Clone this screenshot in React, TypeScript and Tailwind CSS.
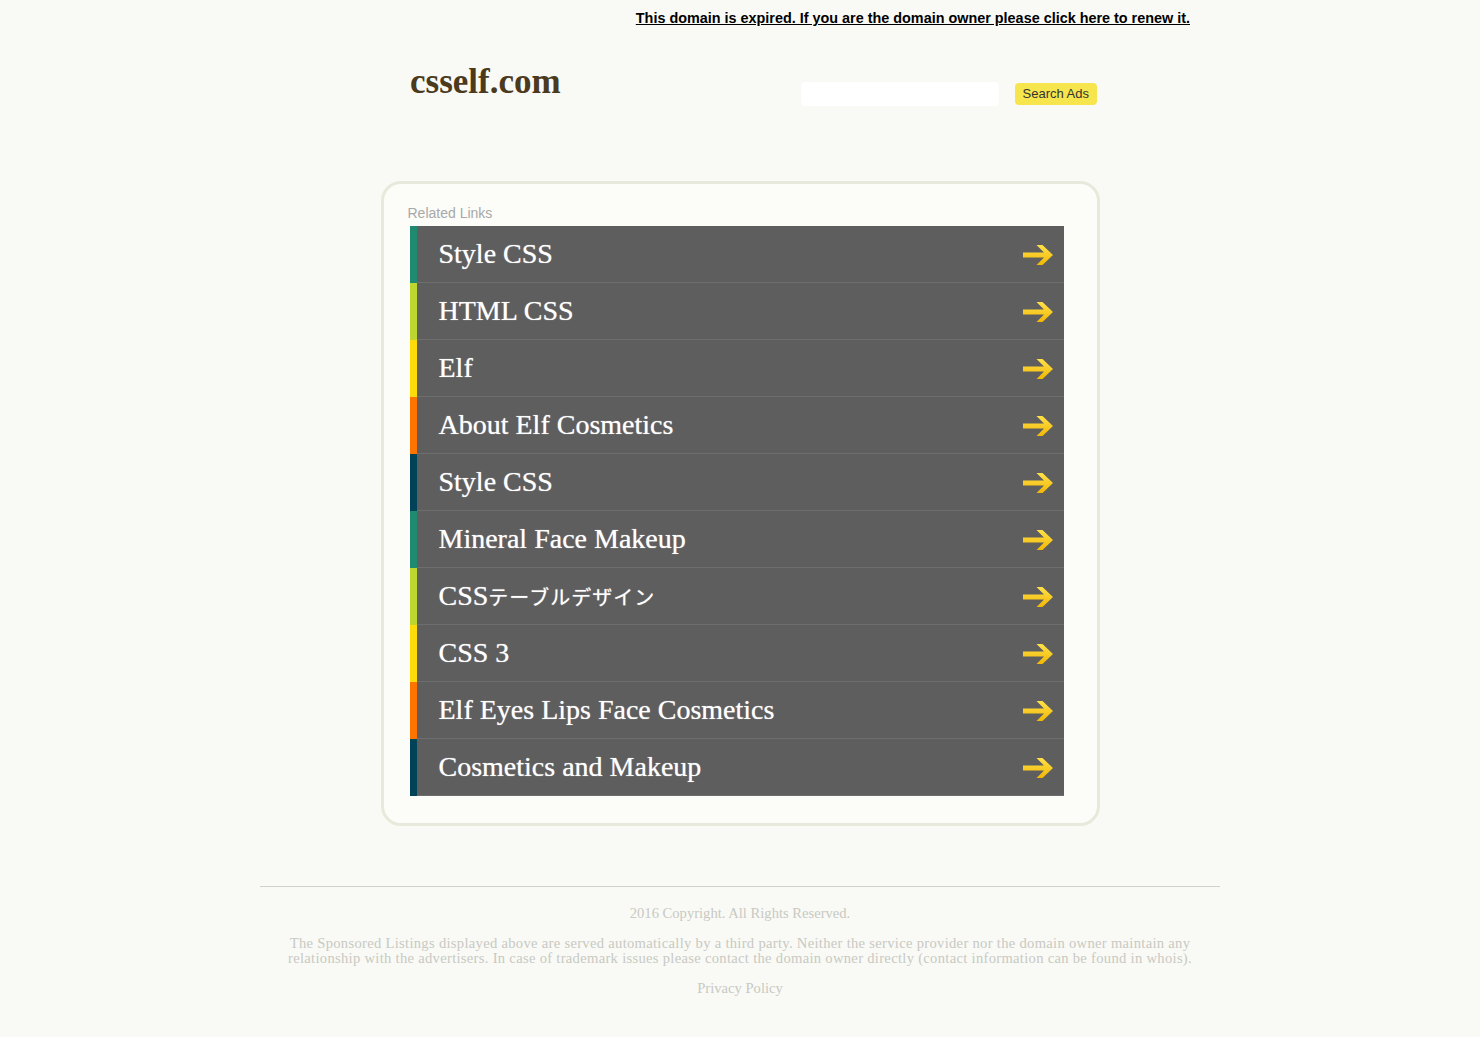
const links = [
  { label: "Style CSS", stripe: "bg-[#1f8a70]" },
  { label: "HTML CSS", stripe: "bg-[#bed630]" },
  { label: "Elf", stripe: "bg-[#fddc09]" },
  { label: "About Elf Cosmetics", stripe: "bg-[#fd7400]" },
  { label: "Style CSS", stripe: "bg-[#004358]" },
  { label: "Mineral Face Makeup", stripe: "bg-[#1f8a70]" },
  { label: "CSS", jp: "テーブルデザイン", stripe: "bg-[#bed630]" },
  { label: "CSS 3", stripe: "bg-[#fddc09]" },
  { label: "Elf Eyes Lips Face Cosmetics", stripe: "bg-[#fd7400]" },
  { label: "Cosmetics and Makeup", stripe: "bg-[#004358]" },
];

function Arrow() {
  return (
    <svg width="34" height="26" viewBox="0 0 34 26" className="shrink-0">
      <defs>
        <linearGradient id="arrowFill" x1="0" y1="0" x2="0" y2="1">
          <stop offset="0" stopColor="#ffe14a" />
          <stop offset="1" stopColor="#f2b705" />
        </linearGradient>
      </defs>
      <path
        d="M1 10.5 H22 L14.5 3 H20.5 L31 13 L20.5 23 H14.5 L22 15.5 H1 Z"
        fill="url(#arrowFill)"
      />
    </svg>
  );
}

export default function App() {
  return (
    <div className="min-h-screen bg-[#f9faf5] font-['Liberation_Sans',Arial,sans-serif]">
      <div className="mx-auto w-[960px]">
        {/* expired notice */}
        <div className="flex justify-end pr-[30px] pt-[9px]">
          <a href="#" className="text-[14.4px] font-bold leading-[18px] text-black underline">
            This domain is expired. If you are the domain owner please click here to renew it.
          </a>
        </div>

        {/* header */}
        <div className="ml-[150px] mt-[35px] flex w-[687px] items-start">
          <div className="font-['Liberation_Serif',serif] text-[35px] font-bold leading-[40px] text-[#4b3a1d]">
            csself.com
          </div>
          <div className="ml-auto mt-[20px] flex items-center gap-[16px]">
            <input className="h-[24px] w-[198px] rounded-[4px] bg-white outline-none" />
            <button className="h-[22px] rounded-[4px] bg-[#f6e54c] px-[8px] text-[13px] leading-[22px] text-[#333]">
              Search Ads
            </button>
          </div>
        </div>

        {/* related links box */}
        <div className="mx-auto mt-[75px] w-[719px] rounded-[20px] border-[3px] border-[#e7eadb] bg-[#fcfdf9] px-[26px] pb-[27px] pt-[21px]">
          <div className="-ml-[2px] mb-[5px] text-[14px] leading-[16px] text-[#a8a8a8]">Related Links</div>
          <div className="w-[654px]">
            {links.map((l, i) => (
              <a key={i} href="#" className="flex h-[57px] bg-[#5e5e5e]">
                <div className={`w-[7px] ${l.stripe}`} />
                <div className="flex flex-1 items-center border-b border-[#6e6e6e] pl-[22px] pr-[8px]">
                  <span className="font-['Liberation_Serif','Noto_Sans_CJK_JP',serif] text-[28px] leading-[30px] text-white [text-shadow:0_0_1px_rgba(255,255,255,0.7)]">
                    {l.label}
                    {l.jp && (
                      <span className="font-['Noto_Sans_CJK_JP',sans-serif] text-[20px] tracking-[1px]">{l.jp}</span>
                    )}
                  </span>
                  <span className="ml-auto pt-[2px]">
                    <Arrow />
                  </span>
                </div>
              </a>
            ))}
          </div>
        </div>

        {/* footer */}
        <div className="mt-[60px] border-t border-[#d0d0c8] pt-[19px] text-center font-['Liberation_Serif',serif] text-[14.6px] leading-[15px] text-[#c8c9c3]">
          <p>2016 Copyright. All Rights Reserved.</p>
          <p className="mx-auto mt-[15px] w-[940px] tracking-[0.3px]">
            The Sponsored Listings displayed above are served automatically by a third party. Neither the service provider nor the domain owner maintain any relationship with the advertisers. In case of trademark issues please contact the domain owner directly (contact information can be found in whois).
          </p>
          <p className="mt-[15px] pb-[40px]">
            <a href="#">Privacy Policy</a>
          </p>
        </div>
      </div>
    </div>
  );
}
